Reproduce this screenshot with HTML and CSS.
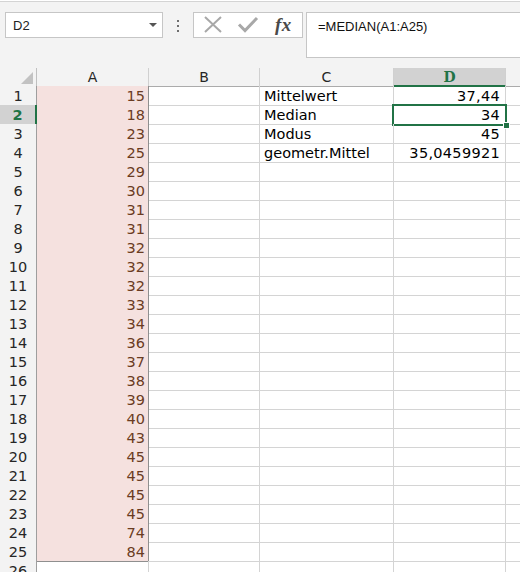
FILE: index.html
```html
<!DOCTYPE html>
<html lang="de">
<head>
    <meta charset="UTF-8">
    <meta name="viewport" content="width=device-width, initial-scale=1.0">
    <title>Mappe1 - Excel</title>
    <link rel="stylesheet" href="styles.css">
</head>
<body>
    <!-- Formula bar -->
    <div class="formula-bar">
        <div class="name-box">
            <span>D2</span>
            <span class="dropdown"></span>
        </div>
        <div class="grip"><i></i><i></i><i></i></div>
        <div class="fx-buttons">
            <svg class="icon" width="20" height="18" viewBox="0 0 20 18">
                <path d="M2 1 L18 16 M18 1 L2 16" stroke="#a8a8a8" stroke-width="2" fill="none"/>
            </svg>
            <svg class="icon" width="22" height="18" viewBox="0 0 22 18">
                <path d="M2 8.5 L8 14.5 L20 2" stroke="#a8a8a8" stroke-width="3" fill="none"/>
            </svg>
            <span class="fx">fx</span>
        </div>
        <div class="formula-input">=MEDIAN(A1:A25)</div>
    </div>

    <!-- Sheet -->
    <div class="sheet">
        <div class="row header">
            <div class="cell corner">
                <svg width="12" height="12" viewBox="0 0 12 12"><path d="M12 0 L12 12 L0 12 Z" fill="#c2c2c2"/></svg>
            </div>
            <div class="cell col-head">A</div>
            <div class="cell col-head">B</div>
            <div class="cell col-head">C</div>
            <div class="cell col-head active">D</div>
            <div class="cell col-head">E</div>
        </div>
        <div class="row"><div class="cell row-head">1</div><div class="cell data">15</div><div class="cell"></div><div class="cell label">Mittelwert</div><div class="cell num">37,44</div><div class="cell"></div></div>
        <div class="row"><div class="cell row-head active">2</div><div class="cell data">18</div><div class="cell"></div><div class="cell label">Median</div><div class="cell num selected">34</div><div class="cell"></div></div>
        <div class="row"><div class="cell row-head">3</div><div class="cell data">23</div><div class="cell"></div><div class="cell label">Modus</div><div class="cell num">45</div><div class="cell"></div></div>
        <div class="row"><div class="cell row-head">4</div><div class="cell data">25</div><div class="cell"></div><div class="cell label">geometr.Mittel</div><div class="cell num">35,0459921</div><div class="cell"></div></div>
        <div class="row"><div class="cell row-head">5</div><div class="cell data">29</div><div class="cell"></div><div class="cell"></div><div class="cell"></div><div class="cell"></div></div>
        <div class="row"><div class="cell row-head">6</div><div class="cell data">30</div><div class="cell"></div><div class="cell"></div><div class="cell"></div><div class="cell"></div></div>
        <div class="row"><div class="cell row-head">7</div><div class="cell data">31</div><div class="cell"></div><div class="cell"></div><div class="cell"></div><div class="cell"></div></div>
        <div class="row"><div class="cell row-head">8</div><div class="cell data">31</div><div class="cell"></div><div class="cell"></div><div class="cell"></div><div class="cell"></div></div>
        <div class="row"><div class="cell row-head">9</div><div class="cell data">32</div><div class="cell"></div><div class="cell"></div><div class="cell"></div><div class="cell"></div></div>
        <div class="row"><div class="cell row-head">10</div><div class="cell data">32</div><div class="cell"></div><div class="cell"></div><div class="cell"></div><div class="cell"></div></div>
        <div class="row"><div class="cell row-head">11</div><div class="cell data">32</div><div class="cell"></div><div class="cell"></div><div class="cell"></div><div class="cell"></div></div>
        <div class="row"><div class="cell row-head">12</div><div class="cell data">33</div><div class="cell"></div><div class="cell"></div><div class="cell"></div><div class="cell"></div></div>
        <div class="row"><div class="cell row-head">13</div><div class="cell data">34</div><div class="cell"></div><div class="cell"></div><div class="cell"></div><div class="cell"></div></div>
        <div class="row"><div class="cell row-head">14</div><div class="cell data">36</div><div class="cell"></div><div class="cell"></div><div class="cell"></div><div class="cell"></div></div>
        <div class="row"><div class="cell row-head">15</div><div class="cell data">37</div><div class="cell"></div><div class="cell"></div><div class="cell"></div><div class="cell"></div></div>
        <div class="row"><div class="cell row-head">16</div><div class="cell data">38</div><div class="cell"></div><div class="cell"></div><div class="cell"></div><div class="cell"></div></div>
        <div class="row"><div class="cell row-head">17</div><div class="cell data">39</div><div class="cell"></div><div class="cell"></div><div class="cell"></div><div class="cell"></div></div>
        <div class="row"><div class="cell row-head">18</div><div class="cell data">40</div><div class="cell"></div><div class="cell"></div><div class="cell"></div><div class="cell"></div></div>
        <div class="row"><div class="cell row-head">19</div><div class="cell data">43</div><div class="cell"></div><div class="cell"></div><div class="cell"></div><div class="cell"></div></div>
        <div class="row"><div class="cell row-head">20</div><div class="cell data">45</div><div class="cell"></div><div class="cell"></div><div class="cell"></div><div class="cell"></div></div>
        <div class="row"><div class="cell row-head">21</div><div class="cell data">45</div><div class="cell"></div><div class="cell"></div><div class="cell"></div><div class="cell"></div></div>
        <div class="row"><div class="cell row-head">22</div><div class="cell data">45</div><div class="cell"></div><div class="cell"></div><div class="cell"></div><div class="cell"></div></div>
        <div class="row"><div class="cell row-head">23</div><div class="cell data">45</div><div class="cell"></div><div class="cell"></div><div class="cell"></div><div class="cell"></div></div>
        <div class="row"><div class="cell row-head">24</div><div class="cell data">74</div><div class="cell"></div><div class="cell"></div><div class="cell"></div><div class="cell"></div></div>
        <div class="row"><div class="cell row-head">25</div><div class="cell data">84</div><div class="cell"></div><div class="cell"></div><div class="cell"></div><div class="cell"></div></div>
        <div class="row"><div class="cell row-head">26</div><div class="cell"></div><div class="cell"></div><div class="cell"></div><div class="cell"></div><div class="cell"></div></div>
    </div>
</body>
</html>
```

FILE: styles.css
```css
html, body {
    margin: 0;
    padding: 0;
    height: 100%;
    overflow: hidden;
    background-color: #fff;
}
body {
    font-family: "DejaVu Sans", Verdana, sans-serif;
    color: #000;
}

/* Formula bar */
.formula-bar {
    display: flex;
    align-items: flex-start;
    height: 56px;
    margin-top: 1px;
    border-top: 1px solid #d4d4d4;
    padding-top: 10px;
    background-color: #f3f3f3;
    font-family: "Liberation Sans", Arial, sans-serif;
    font-size: 13px;
}
.name-box {
    display: flex;
    align-items: center;
    justify-content: space-between;
    box-sizing: border-box;
    width: 158px;
    height: 26px;
    margin-left: 5px;
    padding: 0 5px 0 7px;
    background-color: #fff;
    border: 1px solid #c6c6c6;
    color: #222;
}
.dropdown {
    width: 0;
    height: 0;
    border-left: 4px solid transparent;
    border-right: 4px solid transparent;
    border-top: 4px solid #555;
}
.grip {
    display: flex;
    flex-direction: column;
    gap: 3px;
    width: 30px;
    align-items: center;
    padding-top: 8px;
}
.grip i {
    display: block;
    width: 2px;
    height: 2px;
    background-color: #6e6e6e;
}
.fx-buttons {
    display: flex;
    align-items: center;
    box-sizing: border-box;
    width: 110px;
    height: 26px;
    padding-left: 9px;
    gap: 14px;
    background-color: #fff;
    border: 1px solid #c6c6c6;
}
.fx {
    font-family: "Liberation Serif", "Times New Roman", serif;
    font-style: italic;
    font-weight: bold;
    font-size: 19px;
    color: #4a4a4a;
    margin-left: 2px;
    letter-spacing: 0.5px;
}
.formula-input {
    flex: 1;
    box-sizing: border-box;
    height: 46px;
    margin-left: 3px;
    margin-right: -2px;
    padding: 6px 0 0 11px;
    background-color: #fff;
    border: 1px solid #c6c6c6;
    color: #111;
}

/* Sheet */
.sheet {
    font-size: 14.5px;
    overflow: hidden;
}
.row {
    display: grid;
    grid-template-columns: 37px 112px 111px 134px 112px 112px;
    height: 19px;
}
.row.header {
    height: 18px;
    background-color: #f3f3f3;
}
.cell {
    box-sizing: border-box;
    height: 100%;
    line-height: 18px;
    padding-top: 1px;
    border-right: 1px solid #d4d4d4;
    border-bottom: 1px solid #d4d4d4;
    white-space: nowrap;
    position: relative;
}
.corner {
    display: flex;
    align-items: flex-end;
    justify-content: flex-end;
    padding: 0 3px 2px 0;
    border-right-color: #c0c0c0;
    border-bottom-color: #ababab;
}
.col-head {
    text-align: center;
    font-size: 14px;
    line-height: 16px;
    color: #262626;
    border-bottom-color: #ababab;
    border-right-color: #d0d0d0;
}
.col-head.active {
    background-color: #d2d2d2;
    color: #217346;
    font-weight: bold;
    font-family: "DejaVu Serif", serif;
    border-bottom: 2px solid #217346;
}
.row-head {
    text-align: center;
    background-color: #f3f3f3;
    color: #262626;
    font-size: 14.5px;
    border-right-color: #9e9e9e;
    border-bottom-color: #d0d0d0;
}
.row-head.active {
    background-color: #d2d2d2;
    color: #217346;
    font-weight: bold;
    border-right: 2px solid #217346;
}
.data {
    text-align: right;
    padding-right: 3px;
    background-color: #f5e1df;
    color: #6a3b22;
    border-right-color: #8f8f8f;
    border-bottom-color: #8f8f8f;
}
.label {
    padding-left: 4px;
}
.num {
    text-align: right;
    padding-right: 5px;
    letter-spacing: 0.3px;
}
.selected::after {
    content: "";
    position: absolute;
    top: -1px;
    left: -2px;
    right: -2px;
    bottom: -2px;
    border: 2px solid #217346;
}
.selected::before {
    content: "";
    position: absolute;
    right: -5px;
    bottom: -5px;
    width: 5px;
    height: 5px;
    background-color: #217346;
    border: 1px solid #fff;
    z-index: 2;
}
```
